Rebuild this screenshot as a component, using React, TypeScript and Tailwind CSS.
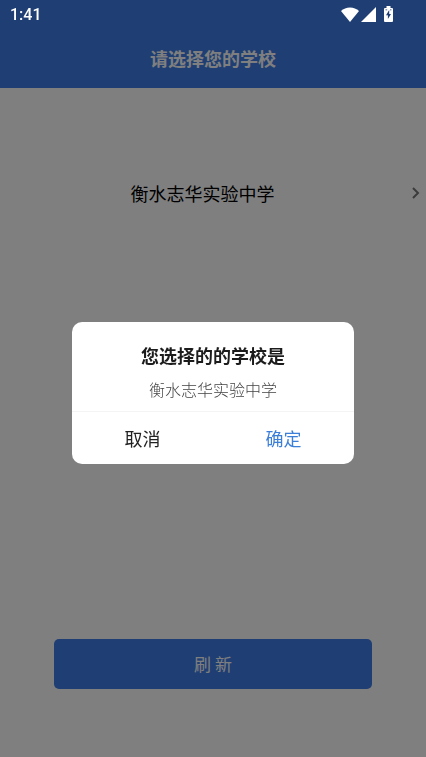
import React from "react";

function StatusBar() {
  return (
    <div className="fixed inset-x-0 top-0 z-20 flex h-[30px] items-center justify-between pl-[10px] pr-[33px] text-white">
      <time className="font-['Roboto',sans-serif] text-base font-medium leading-[30px]">1:41</time>
      <div className="flex items-center pb-[2px]">
        <svg className="h-[15px] w-[18px]" viewBox="0 0 18 15" fill="currentColor" aria-label="Wi-Fi">
          <path d="M9 15 0 4.1C2.4 1.9 5.5.6 9 .6s6.600 1.300 9 3.500z" />
        </svg>
        <svg className="ml-[2px] h-[15px] w-[15px]" viewBox="0 0 15 15" fill="currentColor" aria-label="Signal">
          <path d="M0 15 15 0v15z" />
        </svg>
        <svg className="ml-2 h-4 w-[9px]" viewBox="0 0 9 16" aria-label="Battery charging">
          <path d="M2.500 0h4v2H8q1 0 1 1v12q0 1-1 1H1q-1 0-1-1V3q0-1 1-1h1.500z" fill="currentColor" />
          <path d="M5.200 4 2 9.300h1.900V13L7 8H5.200zM1.500 3.500h1.700v.8H1.500zM6 3.500h1.500v.8H6z" fill="#1e3e74" />
        </svg>
      </div>
    </div>
  );
}

function ConfirmDialog() {
  return (
    <div className="fixed inset-0 z-10 flex items-center justify-center bg-black/50 pt-7">
      <div
        role="dialog"
        aria-modal="true"
        aria-labelledby="dialog-title"
        aria-describedby="dialog-school"
        className="w-[282px] overflow-hidden rounded-[10px] bg-white text-center"
      >
        <div className="px-6 pb-[10px] pt-[19px]">
          <h2 id="dialog-title" className="text-lg font-bold leading-7 text-[#1c1c1c]">
            您选择的的学校是
          </h2>
          <p id="dialog-school" className="mt-2 text-base font-light leading-6 text-[#444444]">
            衡水志华实验中学
          </p>
        </div>
        <div className="grid grid-cols-2 border-t border-[#f4f4f4]">
          <button type="button" className="h-[52px] text-lg text-[#222222]">
            取消
          </button>
          <button type="button" className="h-[52px] text-lg text-[#3c7fd8]">
            确定
          </button>
        </div>
      </div>
    </div>
  );
}

export default function App() {
  return (
    <div className="flex min-h-screen flex-col bg-white font-['Noto_Sans_CJK_SC',sans-serif]">
      <StatusBar />
      <header className="bg-[#3c7ce8] pt-7">
        <h1 className="text-center text-lg font-bold leading-[60px] text-white">请选择您的学校</h1>
      </header>
      <main className="flex grow flex-col pt-20">
        <button type="button" className="flex h-[50px] w-full items-center pr-[6px] text-lg text-black">
          <span className="mr-[7px] grow text-center">衡水志华实验中学</span>
          <svg
            className="h-3 w-2 text-[#777777]"
            viewBox="0 0 8 12"
            fill="none"
            stroke="currentColor"
            strokeWidth="2"
            aria-hidden="true"
          >
            <path d="m1 1 5 5-5 5" />
          </svg>
        </button>
        <div className="mt-auto px-[54px] pb-[68px]">
          <button type="button" className="h-[50px] w-full rounded-[5px] bg-[#3c7ce8] text-[17px] text-white">
            刷 新
          </button>
        </div>
      </main>
      <ConfirmDialog />
    </div>
  );
}
